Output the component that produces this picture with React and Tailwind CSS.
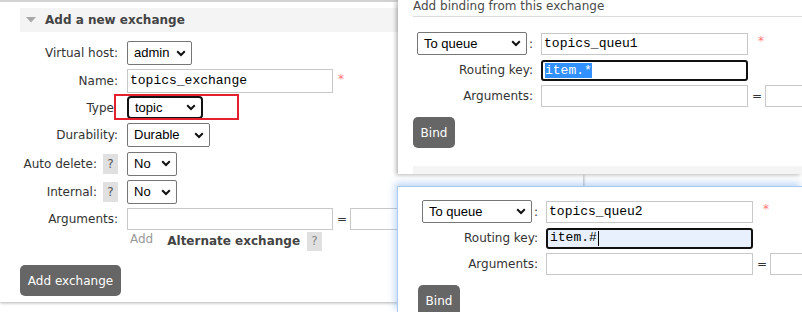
import React from "react";

// small building blocks for the rabbitmq-style form controls
function Chevron() {
  return (
    <svg width="10" height="7" viewBox="0 0 10 7" className="shrink-0">
      <path d="M1.2 1.3 L5 5 L8.8 1.3" fill="none" stroke="#111" strokeWidth="2" />
    </svg>
  );
}

function Select({ value, className = "" }) {
  return (
    <div
      className={`shrink-0 flex items-center justify-between bg-white pl-[6px] pr-[5px] font-['Liberation_Sans',Arial,sans-serif] text-[13px] text-black ${className}`}
    >
      <span>{value}</span>
      <Chevron />
    </div>
  );
}

function Input({ className = "", children }) {
  return (
    <div
      className={`shrink-0 flex items-center pl-[2px] font-['Liberation_Mono','Courier_New',monospace] text-[13px] text-black whitespace-pre ${className}`}
    >
      {children}
    </div>
  );
}

function Help() {
  return (
    <span className="inline-flex items-center justify-center w-[15px] h-[20px] bg-[#e0e0e0] text-[#555] text-[12px]">
      ?
    </span>
  );
}

function Star({ className = "" }) {
  return <span className={`shrink-0 text-[#f77] text-[12px] ${className}`}>*</span>;
}

function Row({ label, help, height, children }) {
  return (
    <div className={`flex items-center ${height}`}>
      <div className="shrink-0 w-[98px] flex items-center justify-end gap-[6px]">
        <span>{label}</span>
        {help && <Help />}
      </div>
      <div className="ml-[9px] flex items-center">{children}</div>
    </div>
  );
}

function BindForm({ queue, routing, focusedBg, className = "" }) {
  return (
    <div className={className}>
      <div className="flex items-center h-[27px] pl-[4px]">
        <Select value="To queue" className="w-[110px] h-[23px] border border-[#767676] rounded-[2px]" />
        <span className="shrink-0 ml-[2px]">:</span>
        <Input className="ml-[8px] w-[207px] h-[22px] bg-white border border-[#c8c8c8]">{queue}</Input>
        <Star className="ml-[10px] mb-[6px]" />
      </div>
      <div className="flex items-center h-[26px] pl-[4px]">
        <div className="shrink-0 w-[116px] text-right">Routing key:</div>
        <Input
          className={`ml-[8px] w-[207px] h-[21px] border-2 border-[#111] rounded-[3px] pl-[1px] ${focusedBg}`}
        >
          {routing}
        </Input>
      </div>
      <div className="flex items-center h-[26px] pl-[4px]">
        <div className="shrink-0 w-[116px] text-right">Arguments:</div>
        <Input className="ml-[8px] w-[207px] h-[22px] bg-white border border-[#c8c8c8]" />
        <span className="shrink-0 ml-[4px] text-[#333]">=</span>
        <Input className="ml-[3px] w-[100px] h-[22px] bg-white border border-[#c8c8c8]" />
      </div>
      <button className="mt-[8px] w-[42px] h-[31px] rounded-[5px] bg-[#666] text-white">Bind</button>
    </div>
  );
}

export default function App() {
  return (
    <div className="relative w-[802px] h-[312px] overflow-hidden bg-white font-['DejaVu_Sans',Verdana,sans-serif] text-[12px] text-[#333]">
      {/* exchange form, in the back */}
      <div className="relative h-[302px] border-t-2 border-[#d2d2d2] bg-white shadow-[0_1px_3px_rgba(0,0,0,0.3)] pt-[6px] pl-[20px]">
        <div className="flex items-center h-[24px] bg-[#f4f4f4]">
          <svg width="10" height="6" viewBox="0 0 10 6" className="ml-[6px]">
            <path d="M0 0 H10 L5 5.5 Z" fill="#a8a8a8" />
          </svg>
          <span className="ml-[9px] font-bold text-[#444]">Add a new exchange</span>
        </div>

        <div className="mt-[7px]">
          <Row label="Virtual host:" height="h-[28px]">
            <Select value="admin" className="w-[65px] h-[24px] border border-[#767676] rounded-[2px]" />
          </Row>
          <Row label="Name:" height="h-[28px]">
            <Input className="w-[206px] h-[24px] bg-white border border-[#c8c8c8]">topics_exchange</Input>
            <Star className="ml-[5px] mb-[4px]" />
          </Row>
          <Row
            label={
              <>
                Type<span className="invisible">:</span>
              </>
            }
            height="h-[25px]"
          >
            <Select value="topic" className="w-[76px] h-[23px] border-2 border-[#111] rounded-[4px] pl-[5px]" />
          </Row>
          <Row label="Durability:" height="h-[30px]">
            <Select value="Durable" className="w-[83px] h-[24px] border border-[#767676] rounded-[2px]" />
          </Row>
          <Row label="Auto delete:" help height="h-[27px]">
            <Select value="No" className="w-[50px] h-[24px] border border-[#767676] rounded-[2px]" />
          </Row>
          <Row label="Internal:" help height="h-[30px]">
            <Select value="No" className="w-[50px] h-[24px] border border-[#767676] rounded-[2px]" />
          </Row>
          <Row label="Arguments:" height="h-[23px]">
            <Input className="w-[206px] h-[22px] bg-white border border-[#c8c8c8]" />
            <span className="shrink-0 ml-[4px]">=</span>
            <Input className="ml-[3px] w-[100px] h-[22px] bg-white border border-[#c8c8c8]" />
          </Row>
          <div className="flex items-center h-[22px] pl-[110px]">
            <span className="text-[#999] mb-[5px]">Add</span>
            <span className="ml-[14px] font-bold text-[#444]">Alternate exchange</span>
            <span className="ml-[7px] inline-flex items-center justify-center w-[15px] h-[19px] bg-[#e0e0e0] text-[#888]">
              ?
            </span>
          </div>
        </div>

        <button className="mt-[13px] w-[101px] h-[31px] rounded-[5px] bg-[#666] text-white">Add exchange</button>

        {/* red annotation around the type select */}
        <div className="absolute left-[114px] top-[92px] w-[125px] h-[26px] border-2 border-[#e3202c]" />
      </div>

      {/* binding window for queue 1 */}
      <div className="absolute left-[398px] top-0 right-0 h-[174px] bg-white shadow-[-2px_1px_4px_rgba(0,0,0,0.28)]">
        <div className="ml-[15px] h-[17px] border-b border-[#dcdcdc] leading-[12px] text-[#4a4a4a]">
          Add binding from this exchange
        </div>
        <BindForm
          className="ml-[15px] mt-[13px]"
          queue="topics_queu1"
          focusedBg="bg-white"
          routing={<span className="bg-[#3390ff] text-white leading-[15px]">item.*</span>}
        />
        <div className="ml-[15px] mt-[18px] h-[8px] bg-[#f4f4f4]" />
      </div>

      <div className="absolute left-[583px] top-[174px] w-[3px] h-[12px] bg-gradient-to-r from-[#c8c8c8] to-transparent" />

      {/* binding window for queue 2 */}
      <div className="absolute left-[397px] top-[186px] right-0 bottom-0 bg-white border-t border-l border-[#a9cbf2] shadow-[-2px_-3px_7px_rgba(110,165,235,0.45)] pt-[11px]">
        <BindForm
          className="ml-[20px]"
          queue="topics_queu2"
          focusedBg="bg-[#e8f0fe]"
          routing={
            <>
              <span>item.#</span>
              <span className="ml-[1px] w-[1px] h-[15px] bg-black" />
            </>
          }
        />
      </div>
    </div>
  );
}
